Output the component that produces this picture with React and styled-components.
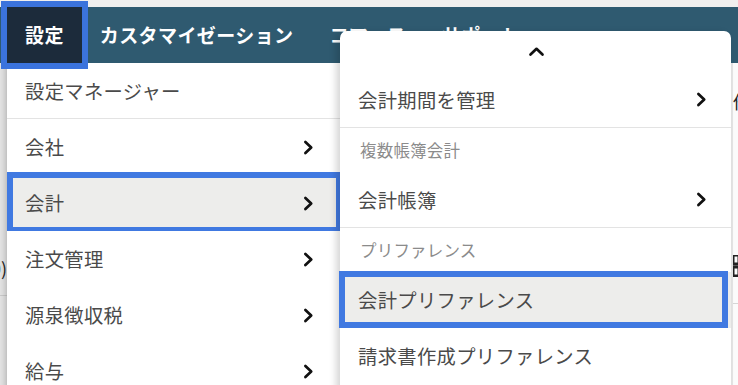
import React from "react";
import styled, { createGlobalStyle, css } from "styled-components";

const GlobalStyle = createGlobalStyle`
  html, body {
    margin: 0;
    padding: 0;
    width: 738px;
    height: 385px;
    overflow: hidden;
    background: #f0efee;
    font-family: "Noto Sans CJK JP", "Noto Sans", sans-serif;
  }
  * { box-sizing: border-box; }
`;

const Page = styled.div`
  position: relative;
  width: 738px;
  height: 385px;
  overflow: hidden;
  background: #f0efee;
  display: flex;
  flex-direction: column;
`;

const TopStrip = styled.div`
  height: 7px;
  flex: none;
  background: #f0efee;
`;

const NavBar = styled.nav`
  position: relative;
  z-index: 2;
  height: 56px;
  flex: none;
  display: flex;
  padding-left: 7px;
  background: #2f5a70;
  overflow: visible;
  white-space: nowrap;
`;

const Tab = styled.div`
  height: 56px;
  line-height: 56px;
  padding: 0 18px;
  font-size: 19px;
  font-weight: 700;
  color: #ffffff;
  letter-spacing: 0.4px;
  ${(p) =>
    p.$active &&
    css`
      background: #1c2b3b;
      outline: 6px solid #3b73dc;
    `}
`;

const Content = styled.div`
  flex: 1;
  display: flex;
  background: #ffffff;
`;

const LeftRail = styled.div`
  width: 7px;
  flex: none;
  background: #e2e2e2;
  display: flex;
  flex-direction: column;
  overflow: hidden;
  padding-top: 194px;
`;

const RailGlyph = styled.div`
  font-size: 18px;
  line-height: 22px;
  color: #222;
  text-align: right;
  white-space: nowrap;
  direction: rtl;
  height: 38px;
`;

const RailLine = styled.div`
  height: 1px;
  background: #c9c9c9;
`;

const Main = styled.div`
  flex: 1;
  background: #fafafa;
`;

const RightRail = styled.div`
  width: 8px;
  flex: none;
  border-left: 3px solid #e4e4e4;
  background: #fbfbfb;
  overflow: hidden;
  display: flex;
  flex-direction: column;
  padding-top: 27px;
`;

const RightText = styled.div`
  font-size: 18px;
  line-height: 22px;
  color: #222;
  white-space: nowrap;
  height: 165px;
`;

const RightIcon = styled.svg`
  display: block;
  flex: none;
`;

const RightLine = styled.div`
  margin-top: 26px;
  height: 1px;
  background: #d6d6d6;
`;

const SetupMenu = styled.div`
  position: absolute;
  z-index: 1;
  left: 7px;
  top: 63px;
  width: 333px;
  background: #ffffff;
  box-shadow: -2px 2px 5px rgba(0, 0, 0, 0.18);
  display: flex;
  flex-direction: column;
`;

const SubMenu = styled.div`
  position: absolute;
  z-index: 3;
  left: 340px;
  top: 31px;
  width: 391px;
  height: 360px;
  background: #ffffff;
  border-radius: 7px 7px 0 0;
  box-shadow: -4px 2px 7px rgba(0, 0, 0, 0.16);
  display: flex;
  flex-direction: column;
`;

const ScrollUp = styled.div`
  height: 41px;
  flex: none;
  display: flex;
  align-items: center;
  justify-content: center;
  padding-left: 2px;
`;

const Row = styled.div`
  position: relative;
  height: 56px;
  flex: none;
  display: flex;
  align-items: center;
  justify-content: space-between;
  padding: 0 ${(p) => p.$padRight}px 0 18px;
  font-size: 19.3px;
  letter-spacing: 0.35px;
  color: #4a4a4a;
  white-space: nowrap;
  background: ${(p) => (p.$selected ? "#ededeb" : "#ffffff")};
  border-bottom: ${(p) => (p.$divider ? "1px solid #e3e3e3" : "none")};
  ${(p) =>
    p.$selected &&
    css`
      &::after {
        content: "";
        position: absolute;
        top: ${p.$ring[0]}px;
        right: ${p.$ring[1]}px;
        bottom: ${p.$ring[2]}px;
        left: ${p.$ring[3]}px;
        border: 6px solid #4079e1;
        pointer-events: none;
      }
    `}
`;

const SectionHeader = styled.div`
  height: 44px;
  flex: none;
  display: flex;
  align-items: center;
  padding-left: 20px;
  font-size: 16.5px;
  color: #8b8b8b;
  letter-spacing: 0.2px;
`;

const ChevronRight = () => (
  <svg width="11" height="15" viewBox="0 0 11 15" aria-hidden="true">
    <polyline
      points="2.4,2 8.2,7.5 2.4,13"
      fill="none"
      stroke="#111"
      strokeWidth="2.7"
      strokeLinecap="round"
      strokeLinejoin="round"
    />
  </svg>
);

const ChevronUp = () => (
  <svg width="17" height="11" viewBox="0 0 17 11" aria-hidden="true">
    <polyline
      points="2.5,8.5 8.5,2.8 14.5,8.5"
      fill="none"
      stroke="#111"
      strokeWidth="2.7"
      strokeLinecap="round"
      strokeLinejoin="round"
    />
  </svg>
);

const setupItems = [
  { label: "設定マネージャー", arrow: false, divider: true },
  { label: "会社", arrow: true },
  { label: "会計", arrow: true, selected: true },
  { label: "注文管理", arrow: true },
  { label: "源泉徴収税", arrow: true },
  { label: "給与", arrow: true },
];

export default function App() {
  return (
    <>
      <GlobalStyle />
      <Page>
        <TopStrip />
        <NavBar>
          <Tab $active>設定</Tab>
          <Tab>カスタマイゼーション</Tab>
          <Tab>コマース</Tab>
          <Tab>サポート</Tab>
        </NavBar>
        <Content>
          <LeftRail>
            <RailGlyph>(0)</RailGlyph>
            <RailLine />
          </LeftRail>
          <Main />
          <RightRail>
            <RightText>他</RightText>
            <RightIcon width="6" height="22" viewBox="0 0 6 22">
              <rect x="0" y="0" width="6" height="9" fill="none" stroke="#222" strokeWidth="3" />
              <rect x="0" y="12" width="6" height="9" fill="none" stroke="#222" strokeWidth="3" />
            </RightIcon>
            <RightLine />
          </RightRail>
        </Content>

        <SetupMenu>
          {setupItems.map((it) => (
            <Row
              key={it.label}
              $padRight={26}
              $divider={it.divider}
              $selected={it.selected}
              $ring={[-3, -2, -2, 0]}
            >
              <span>{it.label}</span>
              {it.arrow && <ChevronRight />}
            </Row>
          ))}
        </SetupMenu>

        <SubMenu>
          <ScrollUp>
            <ChevronUp />
          </ScrollUp>
          <Row $padRight={24} $divider>
            <span>会計期間を管理</span>
            <ChevronRight />
          </Row>
          <SectionHeader>複数帳簿会計</SectionHeader>
          <Row $padRight={24} $divider>
            <span>会計帳簿</span>
            <ChevronRight />
          </Row>
          <SectionHeader>プリファレンス</SectionHeader>
          <Row $padRight={24} $selected $ring={[-1, 3, 0, -1]}>
            <span>会計プリファレンス</span>
          </Row>
          <Row $padRight={24}>
            <span>請求書作成プリファレンス</span>
          </Row>
        </SubMenu>
      </Page>
    </>
  );
}
